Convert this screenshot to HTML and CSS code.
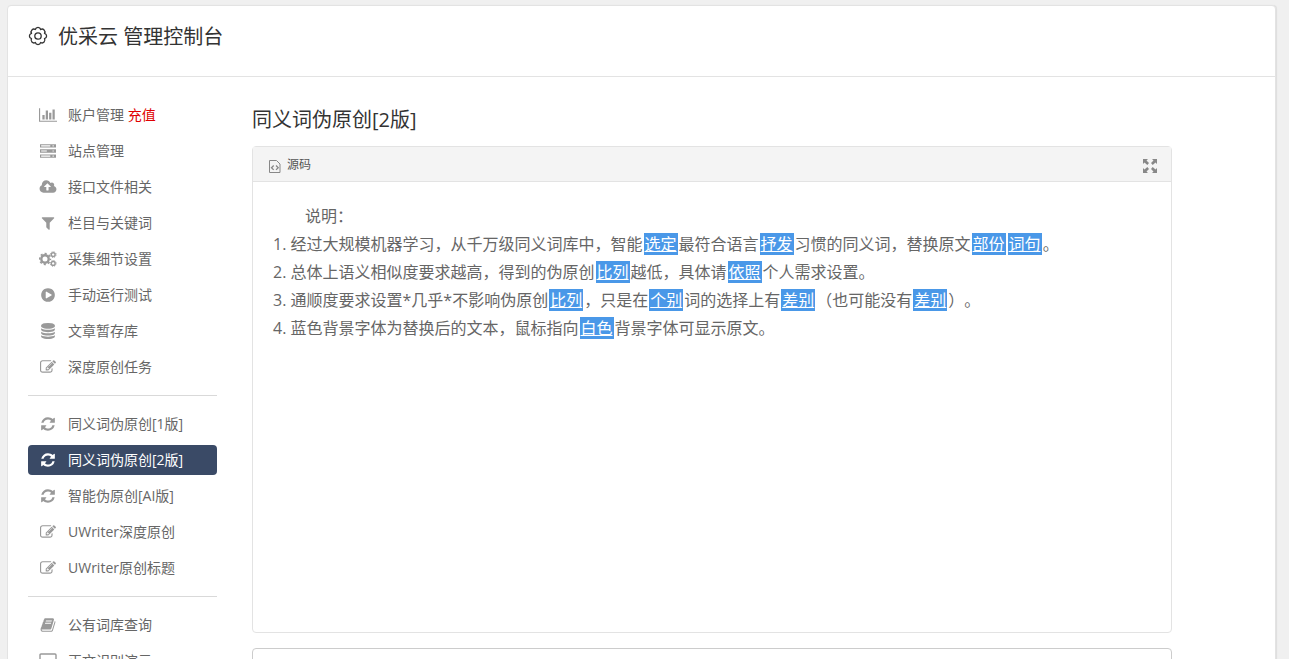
FILE: index.html
```html
<!DOCTYPE html>
<html lang="zh-CN">
<head>
    <meta charset="UTF-8">
    <title>优采云 管理控制台</title>
    <link rel="stylesheet" href="styles.css">
</head>
<body>
    <svg class="sprite" aria-hidden="true">
        <symbol id="i-gear" viewBox="0 0 20 20">
            <g fill="none" stroke="currentColor" stroke-width="1.3" stroke-linejoin="round">
                <path d="M7.320 3.530A2.750 2.750 0 0 1 12.680 3.530A2.750 2.750 0 0 1 16.470 7.320A2.750 2.750 0 0 1 16.470 12.680A2.750 2.750 0 0 1 12.680 16.470A2.750 2.750 0 0 1 7.320 16.470A2.750 2.750 0 0 1 3.530 12.680A2.750 2.750 0 0 1 3.530 7.320A2.750 2.750 0 0 1 7.320 3.530z"/>
                <circle cx="10" cy="10" r="3.200"/>
            </g>
        </symbol>
        <symbol id="i-chart" viewBox="0 0 2048 1792">
            <path d="M640 896v512H384V896h256zm384-512v1024H768V384h256zm1024 1152v128H0V128h128v1408h1920zm-640-896v768h-256V640h256zm384-384v1152h-256V256h256z"/>
        </symbol>
        <symbol id="i-server" viewBox="0 0 1792 1792">
            <path fill-rule="evenodd" d="M0 128h1792v384H0zM128 256v128h1024V256zM1408 256v128h128V256zM0 704h1792v384H0zM128 832v128h640V832zM1408 832v128h128V832zM0 1280h1792v384H0zM128 1408v128h1024v-128zM1408 1408v128h128v-128z"/>
        </symbol>
        <symbol id="i-cloud" viewBox="0 0 2048 1792">
            <path d="M1344 864q0-14-9-23l-352-352q-9-9-23-9t-23 9l-351 351q-10 12-10 24 0 14 9 23t23 9h224v352q0 13 9.500 22.500t22.500 9.500h192q13 0 22.500-9.500t9.500-22.500v-352h224q13 0 22.500-9.500t9.500-22.500zm640 288q0 159-112.500 271.500t-271.500 112.500h-1088q-185 0-316.500-131.500t-131.500-316.500q0-130 70-240t188-165q-2-30-2-43 0-212 150-362t362-150q156 0 285.500 87t188.500 231q71-62 166-62 106 0 181 75t75 181q0 76-41 138 130 31 213.500 135.500t83.500 238.500z"/>
        </symbol>
        <symbol id="i-filter" viewBox="0 0 1792 1792">
            <path d="M1595 295q17 41-14 70l-493 493v742q0 42-39 59-13 5-25 5-27 0-45-19l-256-256q-19-19-19-45v-486l-493-493q-31-29-14-70 17-39 59-39h1280q42 0 59 39z"/>
        </symbol>
        <symbol id="i-cogs" viewBox="0 0 18 16">
            <g fill="none" stroke="currentColor">
                <circle cx="6" cy="8" r="3.700" stroke-width="2.400"/>
                <circle cx="6" cy="8" r="5.400" stroke-width="1.600" stroke-dasharray="2.120 2.120" stroke-dashoffset="1.060"/>
                <circle cx="14.200" cy="3.600" r="1.900" stroke-width="1.400"/>
                <circle cx="14.200" cy="3.600" r="2.900" stroke-width="1" stroke-dasharray="1.140 1.140"/>
                <circle cx="14.200" cy="12.400" r="1.900" stroke-width="1.400"/>
                <circle cx="14.200" cy="12.400" r="2.900" stroke-width="1" stroke-dasharray="1.140 1.140"/>
            </g>
        </symbol>
        <symbol id="i-play" viewBox="0 0 1792 1792">
            <path d="M896 128q209 0 385.500 103t279.500 279.500 103 385.500-103 385.500-279.500 279.500-385.500 103-385.500-103-279.500-279.500-103-385.500 103-385.500 279.500-279.500 385.500-103zm384 823q32-18 32-55t-32-55l-544-320q-31-19-64-1-32 19-32 56v640q0 37 32 56 16 8 32 8 17 0 32-9z"/>
        </symbol>
        <symbol id="i-database" viewBox="0 0 1792 1792">
            <path d="M896 768q237 0 443-43t325-127v170q0 69-103 128t-280 93.500-385 34.500-385-34.500-280-93.500-103-128v-170q119 84 325 127t443 43zm0 768q237 0 443-43t325-127v170q0 69-103 128t-280 93.500-385 34.500-385-34.500-280-93.500-103-128v-170q119 84 325 127t443 43zm0-384q237 0 443-43t325-127v170q0 69-103 128t-280 93.500-385 34.500-385-34.500-280-93.500-103-128v-170q119 84 325 127t443 43zm0-1152q208 0 385 34.500t280 93.500 103 128v128q0 69-103 128t-280 93.500-385 34.500-385-34.500-280-93.500-103-128v-128q0-69 103-128t280-93.500 385-34.500z"/>
        </symbol>
        <symbol id="i-edit" viewBox="0 0 1792 1792">
            <path d="M888 1184l116-116-152-152-116 116v56h96v96h56zm440-720q-16-16-33 1l-350 350q-17 17-1 33t33-1l350-350q17-17 1-33zm80 594v190q0 119-84.500 203.500t-203.500 84.500h-832q-119 0-203.500-84.500t-84.500-203.500v-832q0-119 84.500-203.500t203.500-84.500h832q63 0 117 25 15 7 18 23 3 17-9 29l-49 49q-14 14-32 8-23-6-45-6h-832q-66 0-113 47t-47 113v832q0 66 47 113t113 47h832q66 0 113-47t47-113v-126q0-13 9-22l64-64q15-15 35-7t20 29zm-96-738l288 288-672 672h-288v-288zm444 132l-92 92-288-288 92-92q28-28 68-28t68 28l152 152q28 28 28 68t-28 68z"/>
        </symbol>
        <symbol id="i-refresh" viewBox="0 0 1792 1792">
            <path d="M1639 1056q0 5-1 7-64 268-268 434.500t-478 166.500q-146 0-282.500-55t-243.500-157l-129 129q-19 19-45 19t-45-19-19-45v-448q0-26 19-45t45-19h448q26 0 45 19t19 45-19 45l-137 137q71 66 161 102t187 36q134 0 250-65t186-179q11-17 53-117 8-23 30-23h192q13 0 22.500 9.500t9.500 22.500zm25-800v448q0 26-19 45t-45 19h-448q-26 0-45-19t-19-45 19-45l138-138q-148-137-349-137-134 0-250 65t-186 179q-11 17-53 117-8 23-30 23h-199q-13 0-22.500-9.500t-9.500-22.500v-7q65-268 270-434.500t480-166.500q146 0 284 55.500t245 156.500l130-129q19-19 45-19t45 19 19 45z"/>
        </symbol>
        <symbol id="i-book" viewBox="0 0 1792 1792">
            <path d="M1703 478q40 57 18 129l-275 906q-19 64-76.500 107.500t-122.500 43.500h-923q-77 0-148.500-53.500t-99.500-131.500q-24-67-2-127 0-4 3-27t4-37q1-8-3-21.500t-3-19.500q2-11 8-21t16.500-23.500 16.500-23.500q23-38 45-91.500t30-91.500q3-10 .5-30t-.5-28q3-11 17-28t17-23q21-36 42-92t25-90q1-9-2.500-32t.5-28q4-13 22-30.500t22-22.500q19-26 42.500-84.500t27.500-96.500q1-8-3-25.500t-2-26.500q2-8 9-18t18-23 17-21q8-12 16.500-30.500t15-35 16-36 19.500-32 26.500-23.500 36-11.500 47.500 5.500l-1 3q38-9 51-9h761q74 0 114 56t18 130l-274 906q-36 119-71.500 153.500t-128.500 34.500h-869q-27 0-38 15-11 16-1 43 24 70 144 70h923q29 0 56-15.500t35-41.500l300-987q7-22 5-57 38 15 59 43zm-1064 2q-4 13 2 22.500t20 9.500h608q13 0 25.500-9.500t16.500-22.500l21-64q4-13-2-22.500t-20-9.500h-608q-13 0-25.500 9.500t-16.500 22.500zm-83 256q-4 13 2 22.500t20 9.500h608q13 0 25.500-9.500t16.500-22.500l21-64q4-13-2-22.500t-20-9.500h-608q-13 0-25.500 9.500t-16.500 22.500z"/>
        </symbol>
        <symbol id="i-desktop" viewBox="0 0 18 16">
            <path fill="none" stroke="currentColor" stroke-width="1.400" d="M2 1h14q1 0 1 1v9q0 1-1 1H2q-1 0-1-1V2q0-1 1-1z"/>
            <path d="M7 12h4l1 3H6z"/>
        </symbol>
        <symbol id="i-code" viewBox="0 0 12 15">
            <path fill="none" stroke="currentColor" d="M.5 1.500h7l3.500 3.500v8.500H.5z"/>
            <path fill="none" stroke="currentColor" stroke-width="1.300" d="M4.700 6.500L2.500 8.700l2.200 2.200M7 6.500l2.200 2.200L7 10.900"/>
        </symbol>
        <symbol id="i-expand" viewBox="0 0 14 14">
            <path d="M0 0h5L3.500 1.500 6 4 4.300 6 1.500 3.500 0 5zM14 0v5l-1.500-1.500L9.700 6 8 4l2.500-2.500L9 0zM0 14V9l1.500 1.500L4.300 8 6 10l-2.500 2.500L5 14zM14 14H9l1.500-1.500L8 10l1.700-2 2.800 2.500L14 9z"/>
        </symbol>
    </svg>

    <div class="container">
        <header class="header">
            <svg class="logo"><use href="#i-gear"/></svg>
            <h1>优采云 管理控制台</h1>
        </header>
        <div class="content">
            <nav class="sidebar">
                <a href="#"><svg><use href="#i-chart"/></svg><span>账户管理 <b>充值</b></span></a>
                <a href="#"><svg><use href="#i-server"/></svg>站点管理</a>
                <a href="#"><svg><use href="#i-cloud"/></svg>接口文件相关</a>
                <a href="#"><svg><use href="#i-filter"/></svg>栏目与关键词</a>
                <a href="#"><svg><use href="#i-cogs"/></svg>采集细节设置</a>
                <a href="#"><svg><use href="#i-play"/></svg>手动运行测试</a>
                <a href="#"><svg><use href="#i-database"/></svg>文章暂存库</a>
                <a href="#"><svg><use href="#i-edit"/></svg>深度原创任务</a>
                <hr>
                <a href="#"><svg><use href="#i-refresh"/></svg>同义词伪原创[1版]</a>
                <a href="#" class="active"><svg><use href="#i-refresh"/></svg>同义词伪原创[2版]</a>
                <a href="#"><svg><use href="#i-refresh"/></svg>智能伪原创[AI版]</a>
                <a href="#"><svg><use href="#i-edit"/></svg>UWriter深度原创</a>
                <a href="#"><svg><use href="#i-edit"/></svg>UWriter原创标题</a>
                <hr>
                <a href="#"><svg><use href="#i-book"/></svg>公有词库查询</a>
                <a href="#"><svg><use href="#i-desktop"/></svg>正文识别演示</a>
            </nav>
            <main class="main">
                <h2>同义词伪原创[2版]</h2>
                <div class="editor">
                    <div class="toolbar">
                        <button type="button"><svg class="code"><use href="#i-code"/></svg>源码</button>
                        <button type="button" aria-label="全屏"><svg class="expand"><use href="#i-expand"/></svg></button>
                    </div>
                    <div class="text">
                        <p>说明：</p>
                        <ol>
                            <li>经过大规模机器学习，从千万级同义词库中，智能<u>选定</u>最符合语言<u>抒发</u>习惯的同义词，替换原文<u>部份</u><u>词句</u>。</li>
                            <li>总体上语义相似度要求越高，得到的伪原创<u>比列</u>越低，具体请<u>依照</u>个人需求设置。</li>
                            <li>通顺度要求设置*几乎*不影响伪原创<u>比列</u>，只是在<u>个别</u>词的选择上有<u>差别</u>（也可能没有<u>差别</u>）。</li>
                            <li>蓝色背景字体为替换后的文本，鼠标指向<u>白色</u>背景字体可显示原文。</li>
                        </ol>
                    </div>
                </div>
                <textarea class="result" aria-label="结果"></textarea>
            </main>
        </div>
    </div>
</body>
</html>
```
FILE: styles.css
```css
* {
    box-sizing: border-box;
}
body {
    margin: 0;
    padding: 5px 13px 0 7px;
    background: #f0f0f0;
    color: #666;
    font-family: "Open Sans", "Noto Sans CJK SC", sans-serif;
    font-size: 14px;
    text-spacing-trim: space-all;
}
svg {
    fill: currentColor;
    flex: none;
}
.sprite {
    display: none;
}
.container {
    background: white;
    border: 1px solid #e3e3e3;
    border-radius: 4px;
    box-shadow: 1px 0 1px rgba(0,0,0,0.08);
}
.header {
    display: flex;
    align-items: center;
    gap: 10px;
    height: 71px;
    padding: 0 20px 8px;
    border-bottom: 1px solid #e3e3e3;
    color: #333;
}
.logo {
    width: 20px;
    height: 20px;
    margin-bottom: 3px;
}
h1, h2 {
    margin: 0;
    font-size: 20px;
    font-weight: normal;
    line-height: 30px;
    color: #333;
}
.content {
    display: flex;
    gap: 35px;
    padding: 23px 20px;
}
.sidebar {
    flex: 0 0 189px;
}
.sidebar a {
    display: flex;
    align-items: center;
    gap: 11px;
    height: 30px;
    margin-bottom: 6px;
    padding: 0 0 2px 11px;
    border-radius: 4px;
    color: #666;
    text-decoration: none;
}
.sidebar svg {
    width: 18px;
    height: 16px;
    margin-top: 2px;
    color: #999;
}
.sidebar b {
    color: #e00000;
    font-weight: normal;
}
.sidebar a.active,
.sidebar a.active svg {
    color: white;
}
.sidebar a.active {
    background: #3a4a66;
}
.sidebar hr {
    margin: 13px 0;
    border: 0;
    border-top: 1px solid #d9d9d9;
}
.main {
    flex: 1;
    padding: 5px 83px 0 0;
}
.editor {
    margin: 11px 0 15px;
    border: 1px solid #e3e3e3;
    border-radius: 4px;
}
.toolbar {
    display: flex;
    justify-content: space-between;
    height: 35px;
    padding: 0 14px 0 16px;
    background: #f4f4f4;
    border-bottom: 1px solid #e3e3e3;
}
.toolbar button {
    display: flex;
    align-items: center;
    gap: 6px;
    padding: 0;
    border: 0;
    background: none;
    color: #555;
    font-family: inherit;
    font-size: 12px;
    cursor: pointer;
}
.toolbar svg {
    margin-top: 4px;
    color: #888;
}
.code {
    width: 12px;
    height: 15px;
}
.expand {
    width: 14px;
    height: 14px;
}
.text {
    min-height: 450px;
    padding: 20px;
    font-size: 16px;
    line-height: 28px;
}
.text p {
    margin: 0;
    text-indent: 2em;
}
.text ol {
    margin: 0;
    padding: 0;
    list-style-position: inside;
}
.text u {
    margin: 0 1px;
    padding: 0 1px;
    background: #4a98e8;
    color: white;
}
.result {
    display: block;
    width: 100%;
    height: 200px;
    border: 1px solid #ccc;
    border-radius: 4px;
    resize: none;
}
```
